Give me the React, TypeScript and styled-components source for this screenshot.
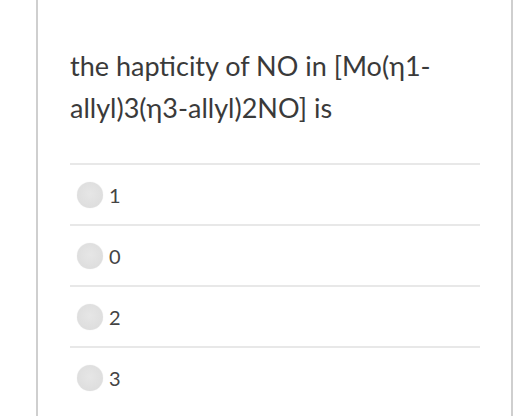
import styled, { createGlobalStyle } from "styled-components";

const GlobalStyle = createGlobalStyle`
  html, body {
    margin: 0;
    padding: 0;
    background: #ffffff;
    overflow: hidden;
  }
  body {
    font-family: Lato, "Open Sans", sans-serif;
    color: #333333;
  }
`;

const Page = styled.div`
  width: 522px;
  height: 416px;
  padding-left: 36px;
  box-sizing: border-box;
`;

const Card = styled.div`
  width: 477px;
  height: 416px;
  box-sizing: border-box;
  border-left: 2px solid #cfcfcf;
  border-right: 2px solid #cfcfcf;
  padding: 45px 31px 0 32px;
`;

const Question = styled.p`
  margin: 0;
  font-size: 27px;
  line-height: 42px;
  color: #3a3a3a;
  padding-bottom: 34px;
`;

const Options = styled.ul`
  list-style: none;
  margin: 0;
  padding: 0;
`;

const Option = styled.li`
  display: flex;
  align-items: center;
  gap: 6px;
  height: 61px;
  box-sizing: border-box;
  border-top: 2px solid #e8e8e8;
  padding-left: 7px;
`;

const Radio = styled.span`
  width: 26px;
  height: 26px;
  border-radius: 50%;
  background: radial-gradient(circle at 50% 45%, #e6e6e6 0%, #dedede 70%, #d6d6d6 100%);
  box-shadow: 0 0 1px rgba(0, 0, 0, 0.12);
`;

const Label = styled.span`
  font-size: 20px;
  color: #444444;
`;

const answers = ["1", "0", "2", "3"];

export default function App() {
  return (
    <>
      <GlobalStyle />
      <Page>
        <Card>
          <Question>
            the hapticity of NO in [Mo(η1-allyl)3(η3-allyl)2NO] is
          </Question>
          <Options>
            {answers.map((a) => (
              <Option key={a}>
                <Radio />
                <Label>{a}</Label>
              </Option>
            ))}
          </Options>
        </Card>
      </Page>
    </>
  );
}
